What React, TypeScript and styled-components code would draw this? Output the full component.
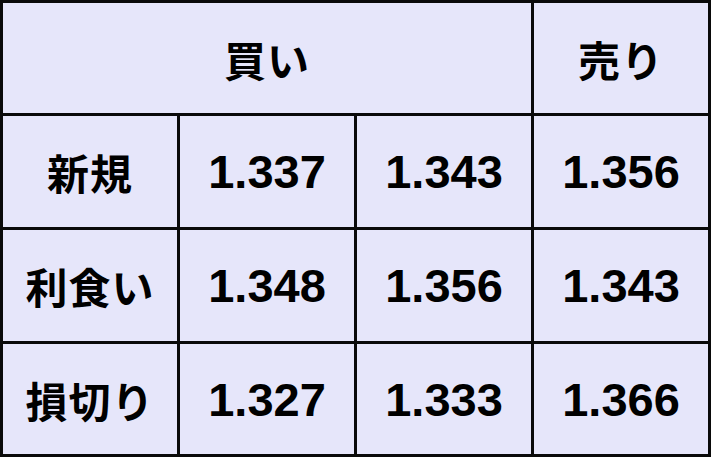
import React from "react";
import styled, { createGlobalStyle } from "styled-components";

const Global = createGlobalStyle`
  html, body { margin: 0; padding: 0; background: #ffffff; }
`;

const Grid = styled.div`
  display: grid;
  grid-template-columns: repeat(4, 174px);
  grid-template-rows: 110px 111px 111px 110px;
  gap: 3px;
  padding: 3px;
  width: max-content;
  background: #0a0a0a;
`;

const Cell = styled.div<{ $span?: number; $kind: "num" | "jp" }>`
  grid-column: span ${(p) => p.$span ?? 1};
  background: #e6e6fa;
  display: flex;
  align-items: center;
  justify-content: center;
  color: #000;
  font-weight: 700;
  font-family: ${(p) =>
    p.$kind === "num"
      ? '"Liberation Sans", Arial, sans-serif'
      : '"Noto Sans CJK JP", "Noto Sans", sans-serif'};
  font-size: ${(p) => (p.$kind === "num" ? "47px" : "42px")};
  letter-spacing: ${(p) => (p.$kind === "num" ? "0" : "1px")};
`;

const rows: { label: string; values: string[] }[] = [
  { label: "新規", values: ["1.337", "1.343", "1.356"] },
  { label: "利食い", values: ["1.348", "1.356", "1.343"] },
  { label: "損切り", values: ["1.327", "1.333", "1.366"] },
];

export default function App() {
  return (
    <>
      <Global />
      <Grid>
        <Cell $span={3} $kind="jp">買い</Cell>
        <Cell $kind="jp">売り</Cell>
        {rows.map((r) => (
          <React.Fragment key={r.label}>
            <Cell $kind="jp">{r.label}</Cell>
            {r.values.map((v, i) => (
              <Cell key={i} $kind="num">{v}</Cell>
            ))}
          </React.Fragment>
        ))}
      </Grid>
    </>
  );
}
